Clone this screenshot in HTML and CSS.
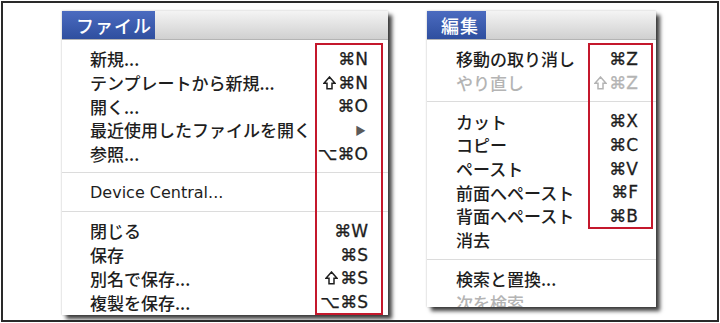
FILE: index.html
```html
<!DOCTYPE html>
<html lang="ja">
<head>
    <meta charset="UTF-8">
    <title>メニュー</title>
    <link rel="stylesheet" href="styles.css">
</head>
<body>
    <div class="frame">

        <div class="menu menu-file">
            <div class="menu-bar">
                <span class="menu-title title-file">ファイル</span>
            </div>
            <div class="menu-body">
                <div class="item"><span>新規...</span><span class="key">⌘N</span></div>
                <div class="item"><span>テンプレートから新規...</span><span class="key"><svg class="shift" viewBox="0 0 13 14"><polygon points="6.5,1 12,7.2 9,7.2 9,12.8 4,12.8 4,7.2 1,7.2"/></svg>⌘N</span></div>
                <div class="item"><span>開く...</span><span class="key">⌘O</span></div>
                <div class="item"><span>最近使用したファイルを開く</span><span class="arrow">▶</span></div>
                <div class="item"><span>参照...</span><span class="key">⌥⌘O</span></div>
                <div class="sep"></div>
                <div class="item"><span class="latin">Device Central...</span></div>
                <div class="sep"></div>
                <div class="item"><span>閉じる</span><span class="key">⌘W</span></div>
                <div class="item"><span>保存</span><span class="key">⌘S</span></div>
                <div class="item"><span>別名で保存...</span><span class="key"><svg class="shift" viewBox="0 0 13 14"><polygon points="6.5,1 12,7.2 9,7.2 9,12.8 4,12.8 4,7.2 1,7.2"/></svg>⌘S</span></div>
                <div class="item"><span>複製を保存...</span><span class="key">⌥⌘S</span></div>
            </div>
            <div class="mark mark-file"></div>
        </div>

        <div class="menu menu-edit">
            <div class="menu-bar">
                <span class="menu-title title-edit">編集</span>
            </div>
            <div class="menu-body">
                <div class="item"><span>移動の取り消し</span><span class="key">⌘Z</span></div>
                <div class="item off"><span>やり直し</span><span class="key"><svg class="shift" viewBox="0 0 13 14"><polygon points="6.5,1 12,7.2 9,7.2 9,12.8 4,12.8 4,7.2 1,7.2"/></svg>⌘Z</span></div>
                <div class="sep"></div>
                <div class="item"><span>カット</span><span class="key">⌘X</span></div>
                <div class="item"><span>コピー</span><span class="key">⌘C</span></div>
                <div class="item"><span>ペースト</span><span class="key">⌘V</span></div>
                <div class="item"><span>前面へペースト</span><span class="key">⌘F</span></div>
                <div class="item"><span>背面へペースト</span><span class="key">⌘B</span></div>
                <div class="item"><span>消去</span></div>
                <div class="sep"></div>
                <div class="item"><span>検索と置換...</span></div>
                <div class="item off"><span>次を検索</span></div>
            </div>
            <div class="mark mark-edit"></div>
        </div>

    </div>
</body>
</html>
```

FILE: styles.css
```css
body {
    margin: 0;
    padding: 0;
    background-color: white;
    font-family: "Noto Sans CJK JP", "Noto Sans", sans-serif;
    color: #1e1e1e;
}

.frame {
    margin: 1px;
    width: 718px;
    height: 321px;
    border: 2px solid #2a2a2a;
    box-sizing: border-box;
    background-color: white;
    display: flex;
    align-items: flex-start;
    gap: 39px;
    padding: 8px 0 0 59px;
    overflow: hidden;
}

.menu {
    position: relative;
    background-color: white;
    box-shadow: 4px 4px 4px rgba(0, 0, 0, 0.75), 0 0 2px rgba(0, 0, 0, 0.25);
}

.menu-file {
    width: 326px;
}

.menu-edit {
    width: 229px;
}

.menu-bar {
    height: 28px;
    display: flex;
    background: linear-gradient(#f4f4f4, #d0d0d0);
    border-bottom: 1px solid #b4b4b4;
}

.menu-title {
    display: flex;
    align-items: center;
    padding-left: 14px;
    box-sizing: border-box;
    color: white;
    font-size: 18px;
    font-weight: 500;
    letter-spacing: 1px;
    background: linear-gradient(#4b6bc0, #2f4f9f);
}

.title-file {
    width: 93px;
}

.title-edit {
    width: 59px;
}

.menu-body {
    padding-top: 7px;
    overflow: hidden;
}

.menu-file .menu-body {
    height: 268px;
    padding-left: 28px;
    padding-right: 20px;
}

.menu-edit .menu-body {
    height: 260px;
    padding-left: 29px;
    padding-right: 18px;
}

.item {
    height: 23.7px;
    display: flex;
    align-items: center;
    justify-content: space-between;
    font-size: 17px;
    font-weight: 500;
    white-space: nowrap;
}

.item.off {
    color: #b4b4b4;
}

.latin {
    font-family: "DejaVu Sans", sans-serif;
    font-size: 16px;
    font-weight: normal;
}

.key {
    display: flex;
    align-items: center;
    font-family: "DejaVu Sans", sans-serif;
    font-size: 17px;
    font-weight: normal;
    -webkit-text-stroke: 0.3px currentColor;
}

.shift {
    width: 13px;
    height: 14px;
    margin-right: 2px;
    fill: none;
    stroke: currentColor;
    stroke-width: 1.5;
    stroke-linejoin: miter;
}

.arrow {
    color: #5a5a5a;
    font-size: 11px;
    margin-right: 2px;
}

.sep {
    height: 15px;
    display: flex;
    align-items: center;
}

.sep::before {
    content: "";
    flex: 1;
    height: 1px;
    background-color: #dcdcdc;
}

.menu-file .sep {
    margin: 0 -20px 0 -28px;
}

.menu-edit .sep {
    margin: 0 -18px 0 -29px;
}

/* red highlight boxes around the shortcuts */
.mark {
    position: absolute;
    border: 2px solid #c4182c;
    box-sizing: border-box;
}

.mark-file {
    left: 253px;
    top: 32px;
    width: 68px;
    height: 272px;
}

.mark-edit {
    left: 161px;
    top: 32px;
    width: 65px;
    height: 186px;
}
```
